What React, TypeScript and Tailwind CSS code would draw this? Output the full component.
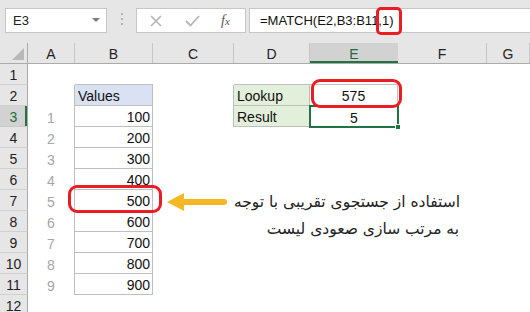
import React from "react";

type CellSpec = { text?: string; cls?: string };

const COLS = ["A", "B", "C", "D", "E", "F", "G"];
const COL_W = ["w-[47px]", "w-[78px]", "w-[81px]", "w-[76px]", "w-[88px]", "w-[89px]", "w-[43px]"];

const line = "border-[#bfbfbf]";
const idx = "justify-center text-[#a6a6a6]";
const num = `justify-end pr-[2px] border-r border-b ${line}`;

function buildRows(): CellSpec[][] {
  const rows: CellSpec[][] = [];
  // row 1
  rows.push([{}, { cls: `border-b ${line}` }, {}, { cls: `border-b ${line}` }, { cls: `border-b ${line}` }, {}, {}]);
  // row 2
  rows.push([
    { cls: `border-r ${line}` },
    { text: "Values", cls: `pl-[3px] bg-[#d9e1f2] border-r border-b ${line}` },
    { cls: `border-r ${line}` },
    { text: "Lookup", cls: `pl-[3px] bg-[#e2efda] border-r border-b ${line}` },
    { text: "575", cls: `justify-center border-r border-b ${line}` },
    {},
    {},
  ]);
  // rows 3..11
  for (let i = 1; i <= 9; i++) {
    const r: CellSpec[] = [
      { text: String(i), cls: `${idx} border-r ${line}` },
      { text: String(i * 100), cls: num },
    ];
    if (i === 1) {
      r.push({ cls: `border-r ${line}` });
      r.push({ text: "Result", cls: `pl-[3px] bg-[#e2efda] border-r border-b ${line}` });
      r.push({ text: "5", cls: "justify-center" });
    } else {
      r.push({}, {}, {});
    }
    r.push({}, {});
    rows.push(r);
  }
  // row 12
  rows.push([{}, {}, {}, {}, {}, {}, {}]);
  return rows;
}

function Toolbar() {
  return (
    <div className="flex h-[43px] items-start bg-[#e6e6e6] pt-[8px]">
      <div className="ml-[5px] flex h-[25px] w-[102px] items-center justify-between border border-[#c6c6c6] bg-white pl-[7px] pr-[6px] text-[13px] text-[#222]">
        <span>E3</span>
        <svg width="8" height="5" viewBox="0 0 8 5">
          <path d="M0 0h8L4 4z" fill="#7a7a7a" />
        </svg>
      </div>
      <div className="ml-[14px] mt-[5px] flex flex-col gap-[3px]">
        <span className="h-[2px] w-[2px] bg-[#b3b3b3]" />
        <span className="h-[2px] w-[2px] bg-[#b3b3b3]" />
        <span className="h-[2px] w-[2px] bg-[#b3b3b3]" />
      </div>
      <div className="ml-[13px] flex h-[25px] w-[110px] items-center border border-[#c6c6c6] bg-white">
        <svg className="ml-[13px]" width="12" height="12" viewBox="0 0 12 12">
          <path d="M1 1l10 10M11 1L1 11" stroke="#b5b5b5" strokeWidth="1.6" />
        </svg>
        <svg className="ml-[23px]" width="15" height="12" viewBox="0 0 15 12">
          <path d="M1 6l4.5 4.5L14 1" stroke="#b5b5b5" strokeWidth="1.8" fill="none" />
        </svg>
        <span className="ml-[21px] font-['Liberation_Serif',serif] text-[14px] italic text-[#555]">
          f<span className="text-[11px]">x</span>
        </span>
      </div>
      <div className="ml-[3px] flex h-[25px] flex-1 items-center border border-[#c6c6c6] border-r-0 bg-white pl-[10px] text-[13px] text-[#111]">
        =MATCH(E2,B3:B11,1)
      </div>
    </div>
  );
}

function HeaderRow() {
  return (
    <div className="flex h-[21px] border-b border-[#ababab] bg-[#e6e6e6]">
      <div className="relative w-[28px] border-r border-[#ababab]">
        <svg className="absolute bottom-[3px] right-[3px]" width="12" height="12" viewBox="0 0 12 12">
          <path d="M12 0v12H0z" fill="#b8b8b8" />
        </svg>
      </div>
      {COLS.map((c, i) => (
        <div
          key={c}
          className={`${COL_W[i]} flex items-end justify-center pb-[1px] text-[14px] leading-[16px] ${
            c === "E"
              ? "bg-[#d2d2d2] text-[#1e6b3e] shadow-[inset_0_-2px_0_#217346]"
              : "border-r border-[#c6c6c6] text-[#222]"
          }`}
        >
          {c}
        </div>
      ))}
    </div>
  );
}

export default function App() {
  const rows = buildRows();
  return (
    <div className="relative h-[312px] w-[530px] overflow-hidden bg-white font-['Liberation_Sans',sans-serif]">
      <Toolbar />
      <HeaderRow />
      {rows.map((cells, ri) => {
        const n = ri + 1;
        return (
          <div key={n} className="flex h-[21px]">
            <div
              className={`flex w-[28px] items-end justify-center border-b border-r pb-[1px] text-[14px] leading-[16px] ${
                n === 3
                  ? "border-b-[#c8c8c8] border-r-[#ababab] bg-[#d2d2d2] text-[#1e6b3e] shadow-[inset_-2px_0_0_#217346]"
                  : "border-b-[#d0d0d0] border-r-[#ababab] bg-[#e6e6e6] text-[#222]"
              }`}
            >
              {n}
            </div>
            {cells.map((cell, ci) => (
              <div
                key={ci}
                className={`${COL_W[ci]} relative flex items-end pb-[1px] text-[14px] leading-[16px] text-[#111] ${cell.cls ?? ""}`}
              >
                {cell.text}
                {n === 3 && ci === 4 && (
                  <>
                    <div className="absolute -bottom-[1px] -left-[1px] -right-[1px] -top-[1px] border-2 border-[#217346]" />
                    <div className="absolute -bottom-[3px] -right-[3px] h-[6px] w-[6px] border border-white bg-[#217346]" />
                  </>
                )}
              </div>
            ))}
          </div>
        );
      })}

      {/* annotation marks */}
      <div className="absolute left-[376px] top-[7px] h-[28px] w-[26px] rounded-[5px] border-[3px] border-[#ea1c24]" />
      <div className="absolute left-[311px] top-[79px] h-[29px] w-[91px] rounded-[9px] border-[3px] border-[#ea1c24]" />
      <div className="absolute left-[68px] top-[185px] h-[28px] w-[94px] rounded-[9px] border-[3px] border-[#ea1c24]" />

      <svg className="absolute left-[165px] top-[191px]" width="66" height="22" viewBox="0 0 66 22">
        <path d="M2 11L19 2V20z" fill="#f3b824" />
        <path d="M18 11H59" stroke="#f3b824" strokeWidth="6" strokeLinecap="round" />
      </svg>

      <div
        dir="rtl"
        className="absolute left-[200px] top-[189px] w-[260px] font-['DejaVu_Sans',sans-serif] text-[15.5px] leading-[27px] text-[#222]"
      >
        <div>استفاده از جستجوی تقریبی با توجه</div>
        <div className="pr-[1px]">به مرتب سازی صعودی لیست</div>
      </div>
    </div>
  );
}
